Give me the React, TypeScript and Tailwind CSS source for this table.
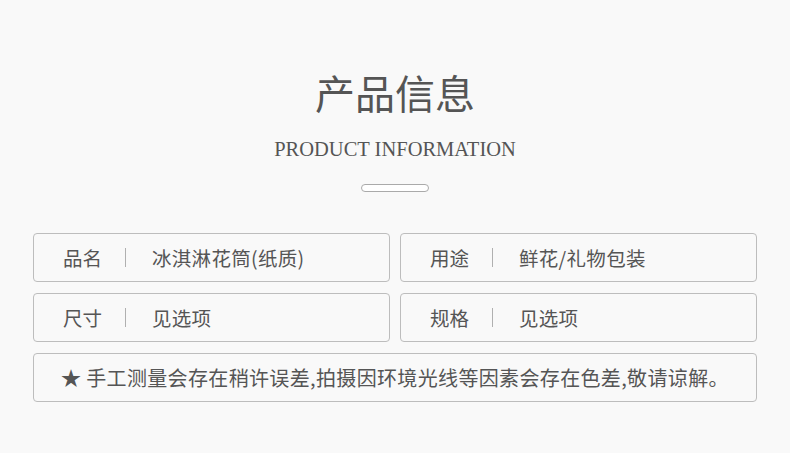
const cjk = { fontFamily: '"Noto Sans CJK SC", "Noto Sans", sans-serif' };

type Spec = { label: string; value: string };

const specs: Spec[] = [
    { label: "品名", value: "冰淇淋花筒(纸质)" },
    { label: "用途", value: "鲜花/礼物包装" },
    { label: "尺寸", value: "见选项" },
    { label: "规格", value: "见选项" },
];

function SpecBox(prop: { spec: Spec }) {
    const { label, value } = prop.spec;
    return (
        <div className="flex h-[49px] items-center rounded-[4px] border border-[#bdbdbd] pl-[29px]">
            <span className="w-[62px] text-[19.5px] leading-none text-[#555]">{label}</span>
            <span className="h-[19px] w-px bg-[#b0b0b0]" />
            <span className="ml-[26px] text-[19.5px] tracking-[0.3px] leading-none text-[#555]">{value}</span>
        </div>
    );
}

export default function App() {
    return (
        <div className="h-[453px] w-[790px] overflow-hidden bg-[#f9f9f9]" style={cjk}>
            <div className="flex flex-col items-center">
                <h1 className="mt-[72px] text-[40px] font-normal leading-[40px] text-[#555]">产品信息</h1>
                <p
                    className="mt-[27px] text-[20.5px] leading-[20px] text-[#555]"
                    style={{ fontFamily: '"Liberation Serif", serif' }}
                >
                    PRODUCT INFORMATION
                </p>
                <div className="mt-[25px] h-[8px] w-[68px] rounded-full border border-[#aaa] bg-white" />
            </div>

            <div className="mt-[41px] px-[33px]">
                <div className="grid grid-cols-2 gap-x-[10px] gap-y-[11px]">
                    {specs.map((s) => (
                        <SpecBox key={s.label} spec={s} />
                    ))}
                </div>
                <div className="mt-[11px] flex h-[49px] items-center rounded-[4px] border border-[#bdbdbd] pl-[27px] text-[20px] tracking-[0.35px] leading-none text-[#555]">
                    ★ 手工测量会存在稍许误差,拍摄因环境光线等因素会存在色差,敬请谅解。
                </div>
            </div>
        </div>
    );
}
